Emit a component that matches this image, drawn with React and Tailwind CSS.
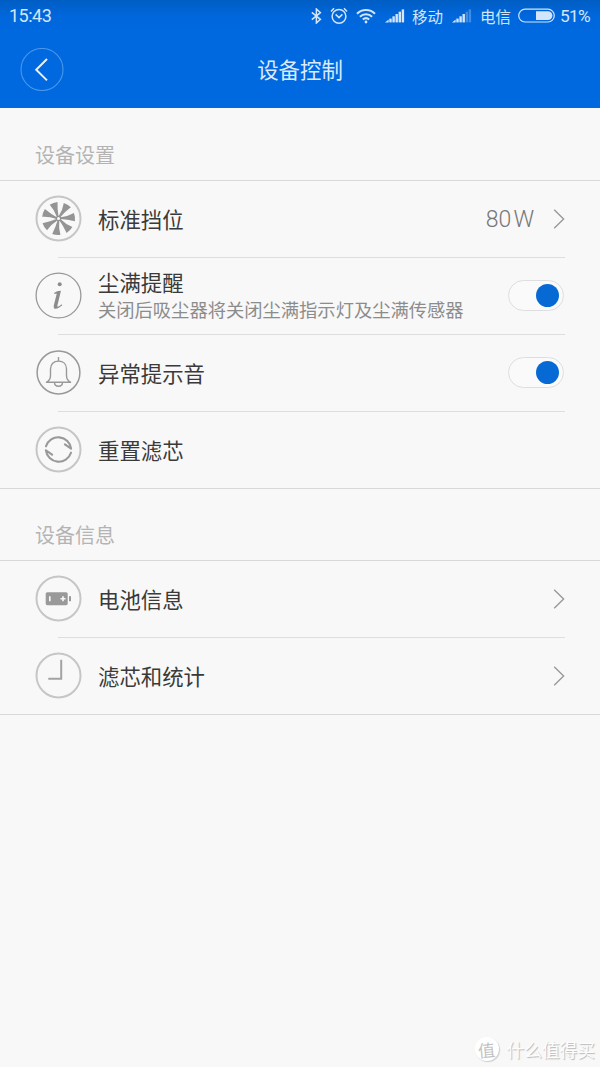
import { useState } from "react";

const RING = "#c6c6c6";
const GLYPH = "#999999";

function Ring({ color = RING, width = 2, r = 22, children }) {
  return (
    <svg width="46" height="46" viewBox="-0.5 0.5 46 46" fill="none" className="shrink-0 overflow-visible">
      <circle cx="23" cy="23" r={r} stroke={color} strokeWidth={width} />
      {children}
    </svg>
  );
}

function FanIcon() {
  return (
    <Ring>
      {[0, 51.4, 102.8, 154.3, 205.7, 257.1, 308.6].map((deg) => (
        <path
          key={deg}
          d="M21.2 21 Q19 14.5 14.2 9.2 Q17.8 6.8 22 6.4 Q21.8 14 23 20.8 Z"
          transform={`rotate(${deg} 23 23)`}
          fill="#949494"
        />
      ))}
      <circle cx="23" cy="23" r="2.8" fill="#949494" />
      <circle cx="23" cy="23" r="1.5" fill="#f8f8f8" />
    </Ring>
  );
}

function InfoIcon() {
  return (
    <Ring color={GLYPH} width={1.3} r={22.4}>
      <circle cx="24.2" cy="11.8" r="2" fill="#8c8c8c" />
      <path
        d="M18.6 20.6 C21 19 23.4 18.2 25.4 18.4 L21.9 33 C21.7 34.8 22.6 34.6 26.4 31.8 L26.8 32.8 C22.8 36.2 17 38.6 18.4 32.4 L21.1 21.8 C21.3 20.6 20.6 20.8 18.9 21.6 Z"
        fill="#8c8c8c"
      />
    </Ring>
  );
}

function BellIcon() {
  return (
    <Ring color={GLYPH} width={1.5} r={21.4}>
      <g stroke={GLYPH} strokeWidth="1.4">
        <path d="M23 7.5V11.5" />
        <path d="M10.5 32.8 C13.8 31.5 15 29.5 15 26 V19.5 C15 14.5 18.2 11.6 23 11.6 C27.8 11.6 31 14.5 31 19.5 V26 C31 29.5 32.2 31.5 35.5 32.8 Z" />
        <path d="M19 33 C19 38 27 38 27 33" />
      </g>
    </Ring>
  );
}

function ResetIcon() {
  return (
    <Ring>
      <g stroke={GLYPH} strokeWidth="2.1" strokeLinecap="round" strokeLinejoin="round">
        <path d="M10.5 19.8 A12.9 12.9 0 0 1 35.6 22.2 L29.4 17.9" />
        <path d="M35.5 26.2 A12.9 12.9 0 0 1 10.4 23.8 L16.6 28.1" />
      </g>
    </Ring>
  );
}

function BatteryIcon() {
  return (
    <Ring>
      <rect x="10.2" y="16.7" width="22" height="13" rx="1.6" fill={GLYPH} />
      <rect x="33.5" y="20.7" width="2" height="5" fill={GLYPH} />
      <path d="M14.3 20.7V25.7M25 23.2H30M27.5 20.7V25.7" stroke="#f8f8f8" strokeWidth="1.6" />
    </Ring>
  );
}

function ClockIcon() {
  return (
    <Ring>
      <path d="M25.7 7.3V26.3H12.8" stroke="#a3a3a3" strokeWidth="2" />
    </Ring>
  );
}

function Chevron() {
  return (
    <svg width="12" height="20" viewBox="0 0 12 20" fill="none" className="shrink-0">
      <path d="M1.2 0.8L10.6 10L1.2 19.2" stroke="#999" strokeWidth="1.4" />
    </svg>
  );
}

function Toggle() {
  const [on, setOn] = useState(true);
  return (
    <button
      type="button"
      role="switch"
      aria-checked={on}
      onClick={() => setOn(!on)}
      className={`mr-px mb-[2px] flex h-[31px] w-14 shrink-0 items-center rounded-full border border-[#dedede] bg-[#fafafa] px-1 ${on ? "justify-end" : "justify-start"}`}
    >
      <span className={`size-[23px] rounded-full ${on ? "bg-[#076ad4]" : "bg-[#c6c6c6]"}`} />
    </button>
  );
}

function Signal({ level }) {
  return (
    <svg width="20" height="14" viewBox="0 0 20 14" fill="#d3e5fa" className="shrink-0">
      <path d="M0 13.4L3.6 10.6V13.4Z" />
      {[0, 1, 2, 3, 4].map((i) => (
        <rect
          key={i}
          x={4.3 + i * 3.1}
          y={9.6 - i * 2.3}
          width="2.4"
          height={3.8 + i * 2.3}
          opacity={i < level ? 1 : 0.3}
        />
      ))}
    </svg>
  );
}

function StatusBar() {
  return (
    <div className="flex h-8 items-center bg-gradient-to-b from-[#005dc4] via-[#0067dc] to-[#0069e0] pl-[9px] text-[15.5px] leading-8 text-[#d3e5fa]">
      <span className="font-[Roboto,sans-serif] text-[18px] tracking-[-0.5px]">15:43</span>
      <div className="ml-auto flex h-8 items-center pb-px pr-px">
        <svg width="11" height="16" viewBox="0 0 11 16" fill="none" stroke="#d3e5fa" strokeWidth="1.5">
          <path d="M0.8 4.4L9.4 11.4L5.4 15V1L9.4 4.6L0.8 11.6" />
        </svg>
        <svg width="18" height="18" viewBox="0 0 18 18" fill="none" stroke="#d3e5fa" strokeWidth="1.5" className="ml-[8px]">
          <circle cx="9" cy="9.3" r="6.9" />
          <path d="M5.6 7.4L9 10.6L12.4 7.4M1 4.6L4 1.3M17 4.6L14 1.3" />
        </svg>
        <svg width="20" height="16" viewBox="0 0 20 16" fill="none" stroke="#d3e5fa" strokeWidth="2" className="ml-[8px]">
          <path d="M1 5.8C6 0.8 14 0.8 19 5.8M3.9 8.8C7.4 5.4 12.6 5.4 16.1 8.8M6.8 11.6C8.7 9.9 11.3 9.9 13.2 11.6" />
          <circle cx="10" cy="14" r="1.4" fill="#d3e5fa" stroke="none" />
        </svg>
        <span className="ml-[9px] flex"><Signal level={5} /></span>
        <span className="ml-[7px] w-[31px]">移动</span>
        <span className="ml-[9px] flex"><Signal level={3} /></span>
        <span className="ml-[8px] w-[31px]">电信</span>
        <svg width="37" height="15" viewBox="0 0 37 15" fill="none" className="ml-[7px]">
          <rect x="0.7" y="1.2" width="35.6" height="12.8" rx="6.4" stroke="#d3e5fa" strokeWidth="1.2" />
          <path d="M18 3.2H30A4.4 4.4 0 0 1 30 12H18Z" fill="#d3e5fa" />
        </svg>
        <span className="ml-[5px] w-[39px] pt-px font-[Roboto,sans-serif] text-[17.3px] tracking-[-0.7px]">51%</span>
      </div>
    </div>
  );
}

function Header() {
  return (
    <header className="h-[108px] bg-[#0069e0]">
      <StatusBar />
      <div className="grid h-[76px] grid-cols-[1fr_auto_1fr] items-center px-5">
        <button type="button" aria-label="返回" className="w-11">
          <svg width="44" height="44" viewBox="0 0 44 44" fill="none">
            <circle cx="22" cy="21.5" r="21" stroke="#4b97ea" strokeWidth="1.1" />
            <path d="M27 11L16.2 21.7L27 32.4" stroke="#e6f0fc" strokeWidth="2" />
          </svg>
        </button>
        <h1 className="pb-[2px] text-[21.4px] text-[#dceafb]">设备控制</h1>
      </div>
    </header>
  );
}

function Row({ icon, title, desc, last, children }) {
  return (
    <div className="flex h-[77px] flex-col">
      <div className="flex flex-1 items-center pl-[35px] pr-[35px]">
        {icon}
        <div className={`ml-[17px] flex-1 whitespace-nowrap ${desc ? "pt-px" : "pb-px"}`}>
          <div className={desc ? "text-[21.4px] leading-[26px]" : "text-[21.4px] leading-8"}>{title}</div>
          {desc && <div className="text-[18.3px] leading-[29px] text-[#8c8c8c]">{desc}</div>}
        </div>
        {children}
      </div>
      <div className={last ? "h-px bg-[#d9d9d9]" : "ml-[58px] mr-[35px] h-px bg-[#dedede]"} />
    </div>
  );
}

function Section({ title, className, children }) {
  return (
    <section>
      <h2 className={`border-b border-[#d9d9d9] pl-[35px] text-[20px] leading-[54px] text-[#b4b4b4] ${className}`}>{title}</h2>
      {children}
    </section>
  );
}

function Watermark() {
  return (
    <div className="absolute bottom-[4px] right-[5px] flex items-center text-[#fdfdfd] [text-shadow:1px_1px_1px_#b8b8b8]">
      <span className="flex size-6 items-center justify-center rounded-full bg-white text-[17px] leading-none text-[#c2c2c2] shadow-[1px_1px_1px_#ccc] [text-shadow:none]">
        <span className="-rotate-6">值</span>
      </span>
      <span className="ml-[8px] text-[17.7px] leading-7">什么值得买</span>
    </div>
  );
}

export default function App() {
  return (
    <div className="relative h-[1067px] w-[600px] overflow-hidden bg-[#f8f8f8] font-['Noto_Sans_CJK_SC',sans-serif] text-[#3a3a3a]">
      <Header />
      <Section title="设备设置" className="h-[73px] pt-[20px]">
        <Row icon={<FanIcon />} title="标准挡位">
          <span className="mr-[19px] pt-[2px] font-[Roboto,sans-serif] text-[23px] font-light text-[#777]">
            80<span className="ml-[2px]">W</span>
          </span>
          <Chevron />
        </Row>
        <Row icon={<InfoIcon />} title="尘满提醒" desc="关闭后吸尘器将关闭尘满指示灯及尘满传感器">
          <Toggle />
        </Row>
        <Row icon={<BellIcon />} title="异常提示音">
          <Toggle />
        </Row>
        <Row icon={<ResetIcon />} title="重置滤芯" last />
      </Section>
      <Section title="设备信息" className="h-[72px] pt-[19px]">
        <Row icon={<BatteryIcon />} title="电池信息">
          <Chevron />
        </Row>
        <Row icon={<ClockIcon />} title="滤芯和统计" last>
          <Chevron />
        </Row>
      </Section>
      <Watermark />
    </div>
  );
}
